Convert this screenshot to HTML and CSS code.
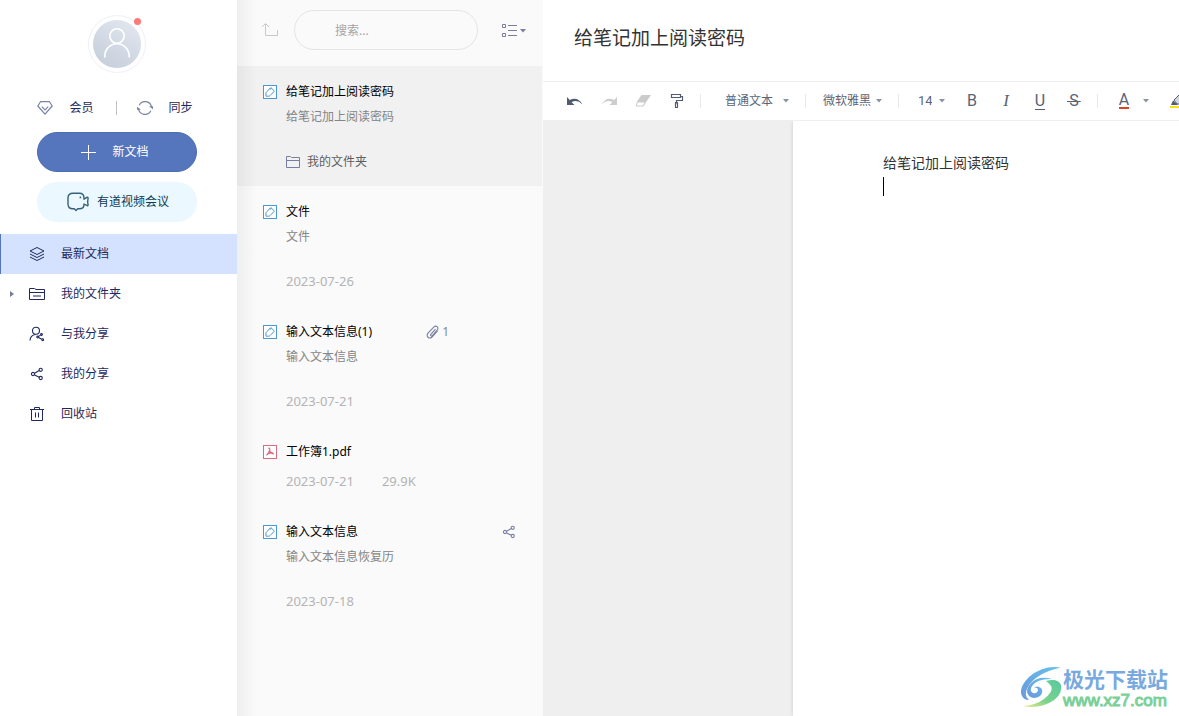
FILE: index.html
```
<!DOCTYPE html>
<html lang="zh-CN">
<head>
<meta charset="utf-8">
<meta name="viewport" content="width=device-width, initial-scale=1">
<title>给笔记加上阅读密码</title>
<link rel="stylesheet" href="styles.css">
</head>
<body>
<svg class="defs" aria-hidden="true">
  <defs>
    <symbol id="note" viewBox="0 0 14 14"><rect x=".5" y=".5" width="13" height="13" fill="#fff" stroke="#4a97d3"/><path d="M3 11.2V7.6L7.3 3q.5-.5 1 0L11 5.600q.5.5 0 1L7 10.600q-.6.6-1.400.6zM8.600 3.300 6.800 4.500" fill="none" stroke="#4a97d3"/></symbol>
    <symbol id="caret" viewBox="0 0 6 4"><path d="M0 0h6L3 3.500z" fill="currentColor"/></symbol>
    <symbol id="share" viewBox="0 0 14 14"><g fill="none" stroke="currentColor" stroke-width="1.100"><circle cx="3" cy="7" r="1.600"/><circle cx="10.700" cy="2.800" r="1.600"/><circle cx="10.700" cy="11" r="1.600"/><path d="M4.600 6.200 9.200 3.600M4.600 7.900l4.700 2.300"/></g></symbol>
  </defs>
</svg>
<div class="app">
  <aside class="sidebar">
    <button class="avatar" type="button" aria-label="账户">
      <svg width="48" height="48" viewBox="0 0 48 48"><defs><linearGradient id="face" x1=".8" y1="0" x2=".2" y2="1"><stop offset="0" stop-color="#e2e6ef"/><stop offset="1" stop-color="#c5cedb"/></linearGradient></defs><circle cx="24" cy="24" r="24" fill="url(#face)"/><g fill="none" stroke="#fff" stroke-width="1.600"><circle cx="24" cy="16" r="7.200"/><path d="M11.800 37.500V36a12.200 12.200 0 0 1 24.400 0v1.500"/></g></svg>
      <span class="badge"></span>
    </button>
    <div class="account">
      <button type="button"><svg width="16" height="14" viewBox="0 0 16 14"><g fill="none" stroke="#7b82a3" stroke-width="1.200"><path d="M3.500.7h9L15.200 5 8 13.200.8 5z" stroke-linejoin="round"/><path d="m4.800 5.600 3.200 3.200 3.200-3.200"/></g></svg>会员</button>
      <span class="rule"></span>
      <button type="button"><svg width="16" height="16" viewBox="0 0 16 16"><g fill="none" stroke="#7b82a3" stroke-width="1.200"><path d="M2.200 5.200A6.500 6.500 0 0 1 14.500 7.500M13.800 10.800A6.500 6.500 0 0 1 1.500 8.500"/></g><path d="M12 6.300h4V9.200zM4 9.700H0V6.800z" fill="#7b82a3"/></svg>同步</button>
    </div>
    <button class="pill create" type="button"><svg width="16" height="16" viewBox="0 0 16 16"><path d="M8.500 1v15M1 8.500h15" stroke="#fff"/></svg>新文档</button>
    <button class="pill meet" type="button"><svg width="22" height="20" viewBox="0 0 22 20"><g fill="none" stroke="#356078" stroke-width="1.400" stroke-linejoin="round"><path d="M6 1.200h6.500Q17 1.200 17 6v1.200l3.300-2q1 .1.700 1.600-.6 2.700 0 5.200.4 1.500-.7 1.700L17 12v.500q0 4.300-4.500 4.300h-1.800L9 18.500l-1.700-1.700H6Q1 16.800 1 12V6Q1 1.200 6 1.200z"/></g><circle cx="13.400" cy="5.400" r=".9" fill="#356078"/></svg>有道视频会议</button>
    <nav class="menu">
      <a class="active" href="#recent"><svg width="16" height="16" viewBox="0 0 16 16"><g fill="none" stroke="currentColor" stroke-linejoin="round"><path d="M8 1.500 15 5 8 8.500 1 5zM1 8l7 3.500L15 8M1 11l7 3.500 7-3.500"/></g></svg>最新文档</a>
      <a href="#folders"><svg class="twist" width="4" height="6" viewBox="0 0 4 6"><path d="M0 0v6l4-3z" fill="#757b99"/></svg><svg width="16" height="14" viewBox="0 0 16 14"><g fill="none" stroke="currentColor"><path d="M.5 12.500V1.500h5l1.500 1h8.500v10zM.5 5.500h15M4 9h8"/></g></svg>我的文件夹</a>
      <a href="#shared"><svg width="16" height="16" viewBox="0 0 16 16"><g fill="none" stroke="currentColor" stroke-width="1.100"><circle cx="7" cy="4.700" r="3.500"/><path d="M1 14.500C1.200 11 3 8.900 6.500 8.500"/><circle cx="12.500" cy="8.500" r=".9"/><circle cx="8.700" cy="11" r=".9"/><circle cx="13.700" cy="13.700" r=".9"/><path d="m9.600 10.400 2-1.300M9.600 11.500l3.100 1.700"/></g></svg>与我分享</a>
      <a href="#sharing"><svg width="16" height="14"><use href="#share"/></svg>我的分享</a>
      <a href="#trash"><svg width="16" height="16" viewBox="0 0 16 16"><g fill="none" stroke="currentColor"><path d="M1 3.500h14M2.500 3.500v11h11v-11M5.500 3V1.500h5V3M6.500 6.500v5M9.500 6.500v5"/></g></svg>回收站</a>
    </nav>
  </aside>

  <section class="list">
    <header class="list-head">
      <button class="up" type="button" aria-label="返回上级"><svg width="18" height="16" viewBox="0 0 18 16"><path d="M4.500 2v11.500h12V8M1 5l3.500-3.500L8 5" fill="none" stroke="#c9c9c9"/></svg></button>
      <input class="search" type="search" aria-label="搜索" placeholder="搜索...">
      <button class="view" type="button" aria-label="视图"><svg width="24" height="14" viewBox="0 0 24 14"><g fill="none" stroke="#787ea0"><path d="M.5 1.500h3v3h-3zM.5 10.500h3v3h-3zM6 2.500h9M6 7.500h9M6 12.500h9"/></g><path d="M18 6h6l-3 3.500z" fill="#787ea0"/></svg></button>
    </header>
    <article class="item selected">
      <h2><svg width="14" height="14"><use href="#note"/></svg>给笔记加上阅读密码</h2>
      <p>给笔记加上阅读密码</p>
      <div class="meta folder"><svg width="14" height="12" viewBox="0 0 14 12"><path d="M.5 11.500V.5h4l1 1h8v10zM.5 4.500h13" fill="none" stroke="#787ea0"/></svg>我的文件夹</div>
    </article>
    <article class="item">
      <h2><svg width="14" height="14"><use href="#note"/></svg>文件</h2>
      <p>文件</p>
      <div class="meta"><time>2023-07-26</time></div>
    </article>
    <article class="item">
      <h2><svg width="14" height="14"><use href="#note"/></svg>输入文本信息(1)<span class="clip"><svg width="13" height="14" viewBox="0 0 13 14"><path d="M9.500 4.200 4.800 9.400q-.6 1.200.3 1.600.7.200 1.300-.5l5-5.700q1.200-1.800-.3-3.200-1.600-1.200-3.100.3L2 8.100q-1.700 2.300 0 4.200 2 1.600 4-.3l5.500-6.200" fill="none" stroke="#787ea0" stroke-width="1.100"/></svg>1</span></h2>
      <p>输入文本信息</p>
      <div class="meta"><time>2023-07-21</time></div>
    </article>
    <article class="item brief">
      <h2><svg width="14" height="14" viewBox="0 0 14 14"><g fill="none" stroke="#db6b82"><rect x=".5" y=".5" width="13" height="13" fill="#fff"/><path d="M5.300 3.400q1.600-.8 1.500 1-.5 3.500-3.300 6M6.500 5.500q1.300 3 4.500 3.500M4.500 9.200q2.500-1.500 5.500-1.200" stroke-width="1.200"/></g></svg>工作簿1.pdf</h2>
      <div class="meta"><time>2023-07-21</time><span>29.9K</span></div>
    </article>
    <article class="item">
      <h2><svg width="14" height="14"><use href="#note"/></svg>输入文本信息<svg class="shared" width="14" height="14"><use href="#share"/></svg></h2>
      <p>输入文本信息恢复历</p>
      <div class="meta"><time>2023-07-18</time></div>
    </article>
  </section>

  <main class="editor">
    <input class="title" type="text" aria-label="标题" value="给笔记加上阅读密码">
    <div class="toolbar" role="toolbar" aria-label="格式">
      <button type="button" aria-label="撤销"><svg width="16" height="10" viewBox="0 0 16 10"><path d="M0 1v8h7.500L4.600 6.300Q10 3 15.500 8.500 11 .4 2.800 3.900z" fill="#535c6e"/></svg></button>
      <button type="button" aria-label="重做"><svg width="16" height="10" viewBox="0 0 16 10"><path d="M16 1v8H8.500l2.900-2.700Q6 3 .5 8.500 5 .4 13.200 3.900z" fill="#cdcdcd"/></svg></button>
      <button type="button" aria-label="清除格式"><svg width="16" height="14" viewBox="0 0 16 14"><path d="M6.500 1H16l-4.500 6.500H2zM2 7.500h9.500L8.500 12.500H.7z" fill="#cbcbcb"/><path d="M2.800 8.400h6.800L7.800 11.600H1.900z" fill="#fff"/></svg></button>
      <button type="button" aria-label="格式刷"><svg width="14" height="16" viewBox="0 0 14 16"><path d="M1.500 1.500h9v3h-9zM10.500 3.500h2v4h-6v3M5.500 9.500h2v5h-2z" fill="none" stroke="#535c6e" stroke-width="1.200"/></svg></button>
      <span class="sep"></span>
      <label class="pick style"><select aria-label="段落样式"><option>普通文本</option></select><svg width="6" height="4"><use href="#caret"/></svg></label>
      <span class="sep"></span>
      <label class="pick font"><select aria-label="字体"><option>微软雅黑</option></select><svg width="6" height="4"><use href="#caret"/></svg></label>
      <span class="sep"></span>
      <label class="pick size"><select aria-label="字号"><option>14</option></select><svg width="6" height="4"><use href="#caret"/></svg></label>
      <button class="letter" type="button" aria-label="加粗">B</button>
      <button class="letter italic" type="button" aria-label="斜体">I</button>
      <button class="letter" type="button" aria-label="下划线"><span class="under">U</span></button>
      <button class="letter" type="button" aria-label="删除线"><span class="strike">S</span></button>
      <span class="sep"></span>
      <button class="letter ink" type="button" aria-label="文字颜色"><span class="red">A</span></button>
      <button class="more" type="button" aria-label="更多颜色"><svg width="6" height="4"><use href="#caret"/></svg></button>
      <button type="button" aria-label="突出显示"><svg width="18" height="14" viewBox="0 0 18 14"><path d="M0 12h18v2H0z" fill="#f8df1b"/><path d="m4 6 5-5h5l1 3-6 6H7z" fill="#d4d6df" stroke="#535c6e"/><path d="m3 6.500 5 4.500H1z" fill="#535c6e"/></svg></button>
    </div>
    <div class="desk">
      <div class="paper" contenteditable="true" role="textbox" aria-label="正文">
        <p>给笔记加上阅读密码</p>
        <p class="cursor-line"><span class="cursor"></span></p>
      </div>
    </div>
    <div class="watermark">
      <svg width="44" height="42" viewBox="0 0 44 42"><defs><linearGradient id="sky" x1="1" y1="0" x2="0" y2="1"><stop offset="0" stop-color="#63c2ec"/><stop offset="1" stop-color="#6c98da"/></linearGradient><linearGradient id="leaf" x1="1" y1="0" x2="0" y2="1"><stop offset="0" stop-color="#58c9a0"/><stop offset=".6" stop-color="#7bd38a"/><stop offset="1" stop-color="#f0ed8b"/></linearGradient></defs><path d="M42 1.500Q24-1 10 11-1 22 3 30q2 4 7 4Q4 29 9 21 17 7 42 1.500z" fill="url(#sky)"/><path d="M33 13Q20 9 12 17 5 25 10 30q5 4 11 0 4-4 1-8-4-3-7 0 4-1 4 2-1 4-5 3-4-2-1-7 5-7 18-7z" fill="url(#sky)"/><path d="M27 15q12-3 15 4 2 11-12 18-13 6-26 3 13-1 21-7 10-8 7-13-2-3-5-5z" fill="url(#leaf)"/></svg>
      <div><strong>极光下载站</strong><span>www.xz7.com</span></div>
    </div>
  </main>
</div>
</body>
</html>
```
FILE: styles.css
```
* { box-sizing: border-box; }
body {
  margin: 0;
  font: 12px/24px "Noto Sans", "Noto Sans CJK SC", sans-serif;
  color: #1f2a5c;
  background: #fff;
}
button, input, select { font: inherit; color: inherit; }
button { padding: 0; border: 0; background: none; display: flex; align-items: center; justify-content: center; }
h2, p { margin: 0; font-size: inherit; font-weight: 400; }
svg { flex: none; display: block; }
a { color: inherit; text-decoration: none; }
.defs { position: absolute; width: 0; height: 0; }

.app { display: grid; grid-template-columns: 237px 306px minmax(0, 1fr); min-height: 100vh; }

.sidebar { display: flex; flex-direction: column; align-items: center; padding-top: 15px; }
.avatar { position: relative; width: 58px; height: 58px; border: 1px solid #eeeffa; border-radius: 50%; margin-right: 3px; }
.badge { position: absolute; top: 2px; right: 4px; width: 7px; height: 7px; border-radius: 50%; background: #ff7a76; }
.account { display: flex; align-items: center; gap: 20px; margin: 22px 7px 12px 0; }
.account button { gap: 16px; line-height: 25px; }
.rule { width: 1px; height: 14px; background: #bfc0c6; margin-left: 2px; }
.pill { width: 160px; height: 40px; border-radius: 20px; margin-right: 3px; }
.create { background: #5575bd; color: #fff; gap: 16px; border: 1px solid #4d6eb5; padding-right: 5px; }
.meet { background: #ebf8ff; color: #0c3a54; gap: 8px; margin-top: 10px; padding-left: 2px; }
.menu { width: 100%; margin-top: 12px; }
.menu a { display: flex; align-items: center; gap: 16px; height: 40px; padding-left: 29px; position: relative; }
.menu .active { background: #d4e2ff; border-left: 1px solid #5575bd; padding-left: 28px; }
.twist { position: absolute; left: 10px; }

.list {
  background: linear-gradient(90deg, rgba(0, 20, 10, .05), rgba(0, 20, 10, 0) 20px) #fafafa;
  padding-right: 1px;
  font-size: 12px;
}
.list-head { display: flex; align-items: center; height: 66px; padding: 0 17px 6px 24px; }
.search {
  width: 184px; height: 40px; margin: 0 24px 0 15px; padding: 0 40px;
  border: 1px solid #e4e4e4; border-radius: 20px; background: transparent; outline: 0;
  appearance: none;
}
.search::placeholder { color: #a5a5a5; opacity: 1; }
.item { padding: 13px 26px 12px; line-height: 25px; }
.selected { background: rgba(0, 0, 0, .035); }
.item h2 { display: flex; align-items: center; gap: 9px; color: #000; }
.item p { padding-left: 23px; color: #858585; }
.meta { display: flex; align-items: center; gap: 28px; margin-top: 20px; padding-left: 23px; font-size: 13px; color: #b4b4b4; }
.brief .meta { margin-top: 5px; }
.folder { gap: 7px; font-size: 12px; color: #5f5f5f; }
.clip { display: flex; align-items: center; gap: 3px; margin: 0 67px 0 auto; color: #8087a5; }
.shared { margin-left: auto; color: #787ea0; }

.editor { position: relative; display: flex; flex-direction: column; overflow: hidden; }
.title { height: 81px; padding: 0 31px 8px; border: 0; outline: 0; font-size: 19px; color: #333; background: #fff; }
.toolbar {
  display: flex; align-items: center; height: 40px; padding-left: 15px; overflow: hidden;
  border-top: 1px solid #efefef; border-bottom: 1px solid #efefef; color: #5c6577;
}
.toolbar > * { flex: none; }
.toolbar button { width: 34px; height: 32px; }
.sep { width: 1px; height: 14px; margin: 0 0 0 6px; background: #e9e9e9; }
.pick { display: flex; align-items: center; color: #8a91a0; }
.pick select { appearance: none; width: 48px; padding: 0; border: 0; outline: 0; background: none; color: #5c6577; }
.style { padding: 0 10px 0 24px; gap: 10px; }
.font { padding: 0 10px 0 17px; gap: 5px; }
.size { padding: 0 10px 0 19px; gap: 7px; }
.size select { width: 14px; font-family: Roboto, sans-serif; font-size: 13px; }
.toolbar .letter { font: 16px/16px Roboto, sans-serif; color: #5a6375; }
.toolbar .italic { font-family: "Liberation Serif", serif; font-style: italic; font-size: 17px; }
.under { border-bottom: 1px solid #535c6e; }
.strike { padding: 0 2px; background: linear-gradient(#5a6375, #5a6375) center / 100% 1px no-repeat; }
.toolbar .ink { margin-left: 9px; }
.red { border-bottom: 2px solid #e23c23; line-height: 14px; }
.toolbar .more { width: 10px; margin-right: 11px; color: #8a91a0; }
.desk { flex: 1; display: flex; padding-left: 250px; background: #efefef; }
.paper { flex: 1; padding: 30px 90px; background: #fff; box-shadow: 0 0 4px rgba(0, 0, 0, .15); outline: 0; font-size: 14px; color: #333; clip-path: inset(0 0 0 -4px); }
.cursor-line { display: flex; align-items: center; height: 22px; }
.cursor { width: 1px; height: 19px; background: #000; }
.watermark { position: absolute; right: 11px; bottom: 6px; display: flex; align-items: center; }
.watermark strong, .watermark span { display: block; }
.watermark strong { font: 700 21px/28px "Noto Sans CJK SC", sans-serif; color: #78a9df; }
.watermark span { font: 17px/18px "Liberation Sans", sans-serif; color: #7bd09a; -webkit-text-stroke: 1px #7bd09a; }
```
